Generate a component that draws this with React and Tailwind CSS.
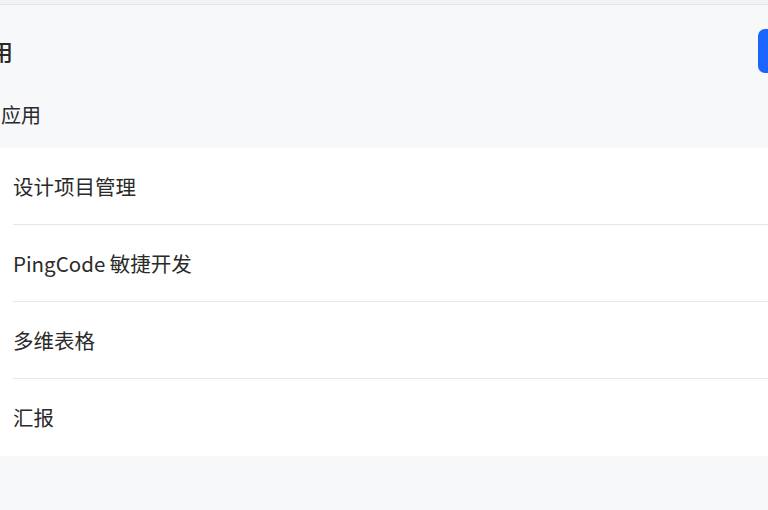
import React from "react";

const rows = ["设计项目管理", "PingCode 敏捷开发", "多维表格", "汇报"];

export default function App() {
  return (
    <div
      className="w-full h-[510px] overflow-hidden bg-[#f7f8fa] text-[#2a2a2a]"
      style={{ fontFamily: '"Noto Sans CJK SC", "Noto Sans", sans-serif' }}
    >
      <div className="h-[5px] bg-[#f1f2f4] border-b border-[#e2e4e7]" />
      <div className="h-[92px] flex items-center justify-between">
        <div className="-ml-[10px] text-[23px] leading-none font-medium">用</div>
        <div className="w-[10px] h-[44px] rounded-l-[7px] bg-[#1a66ff]" />
      </div>
      <div className="h-[36px] flex items-center pl-[1px] text-[20px] leading-none">
        应用
      </div>
      <div className="mt-[15px] bg-white">
        {rows.map((r, i) => (
          <div key={r} className="ml-[13px]">
            <div
              className={
                "h-[77px] flex items-center text-[20.5px] leading-none " +
                (i < rows.length - 1 ? "border-b border-[#e6e7ea]" : "")
              }
            >
              {r}
            </div>
          </div>
        ))}
      </div>
    </div>
  );
}
